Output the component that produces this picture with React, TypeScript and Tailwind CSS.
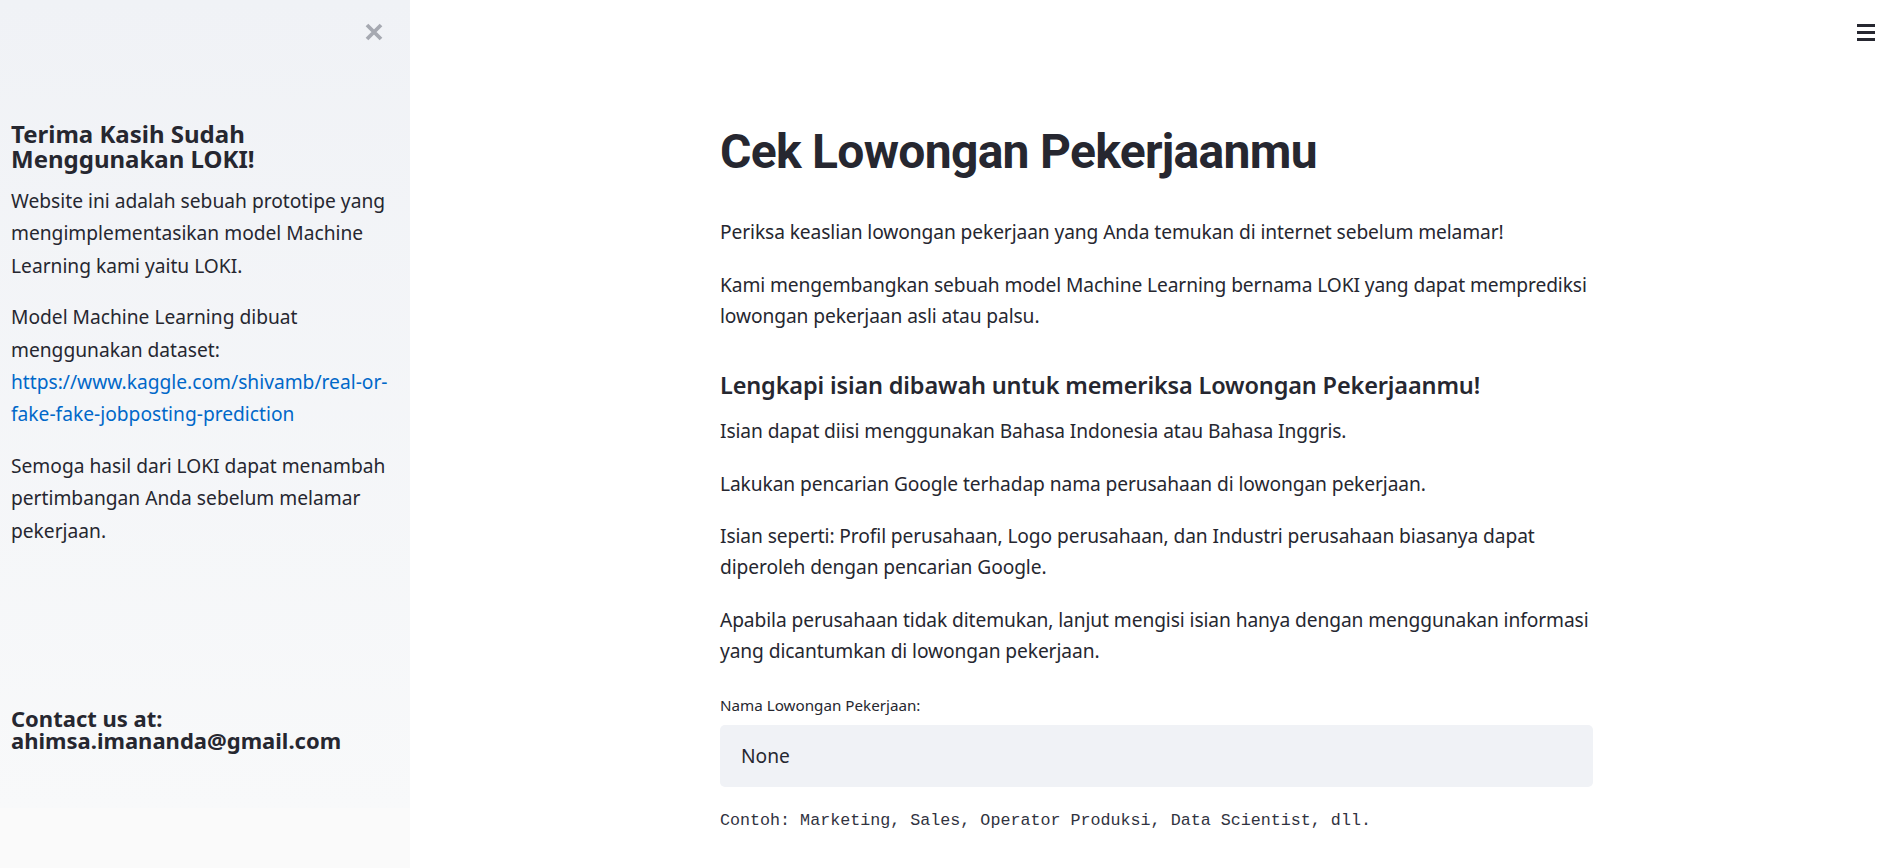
export default function App() {
  const side = "text-[19.2px] leading-[32.4px] text-[#262730]";
  const body = "text-[19.2px] leading-[31px] tracking-[-0.1px] text-[#262730]";
  return (
    <div className="flex min-h-[868px] w-full bg-white font-['Noto_Sans',sans-serif] text-[#262730]">
      {/* Sidebar */}
      <aside className="flex w-[410px] shrink-0 flex-col bg-[#fafafa]">
        <div className="flex min-h-[808px] flex-col bg-gradient-to-b from-[#f0f2f6] to-[#f8f9fa] pl-[11px] pr-[20px]">
          <div className="flex justify-end pr-[6px] pt-[22px]">
            <button className="flex h-[20px] w-[20px] items-center justify-center text-[#a6a9b1]">
              <svg width="18" height="18" viewBox="0 0 18 18" fill="none" stroke="currentColor" strokeWidth="3.8">
                <path d="M2 2L16 16M16 2L2 16" />
              </svg>
            </button>
          </div>
          <h3 className="mt-[79px] text-[24px] font-bold leading-[25px]">
            Terima Kasih Sudah
            <br />
            Menggunakan LOKI!
          </h3>
          <p className={`${side} mt-[14px]`}>
            Website ini adalah sebuah prototipe yang mengimplementasikan model Machine Learning kami yaitu LOKI.
          </p>
          <p className={`${side} mt-[19px]`}>
            Model Machine Learning dibuat menggunakan dataset:{" "}
            <a href="#" className="text-[#0068c9]">
              https://www.kaggle.com/shivamb/real-or-fake-fake-jobposting-prediction
            </a>
          </p>
          <p className={`${side} mt-[19px]`}>
            Semoga hasil dari LOKI dapat menambah pertimbangan Anda sebelum melamar pekerjaan.
          </p>
          <h3 className="mt-[160px] text-[22px] font-bold leading-[22px]">
            Contact us at:
            <br />
            ahimsa.imananda@gmail.com
          </h3>
        </div>
      </aside>

      {/* Main */}
      <main className="flex flex-1 justify-center pl-[19px]">
        <div className="w-[873px] pt-[120px]">
          <h1 className="font-['Roboto',sans-serif] text-[48px] font-bold leading-[63px] tracking-[-0.7px]">
            Cek Lowongan Pekerjaanmu
          </h1>
          <p className={`${body} mt-[33px]`}>
            Periksa keaslian lowongan pekerjaan yang Anda temukan di internet sebelum melamar!
          </p>
          <p className={`${body} mt-[22px]`}>
            Kami mengembangkan sebuah model Machine Learning bernama LOKI yang dapat memprediksi lowongan pekerjaan asli atau palsu.
          </p>
          <h3 className="mt-[40px] text-[23.5px] font-semibold leading-[29px] tracking-[-0.15px]">
            Lengkapi isian dibawah untuk memeriksa Lowongan Pekerjaanmu!
          </h3>
          <p className={`${body} mt-[15px]`}>Isian dapat diisi menggunakan Bahasa Indonesia atau Bahasa Inggris.</p>
          <p className={`${body} mt-[22px]`}>Lakukan pencarian Google terhadap nama perusahaan di lowongan pekerjaan.</p>
          <p className={`${body} mt-[21px]`}>
            Isian seperti: Profil perusahaan, Logo perusahaan, dan Industri perusahaan biasanya dapat diperoleh dengan pencarian Google.
          </p>
          <p className={`${body} mt-[22px]`}>
            Apabila perusahaan tidak ditemukan, lanjut mengisi isian hanya dengan menggunakan informasi yang dicantumkan di lowongan pekerjaan.
          </p>
          <label className="mt-[29px] block text-[15.2px] leading-[20px]">Nama Lowongan Pekerjaan:</label>
          <div className="mt-[10px] flex h-[62px] items-center rounded-[5px] bg-[#f0f2f6] px-[21px] text-[19.2px]">
            None
          </div>
          <p className="mt-[22px] font-['Liberation_Mono',monospace] text-[16.7px] leading-[24px] text-[#31333f]">
            Contoh: Marketing, Sales, Operator Produksi, Data Scientist, dll.
          </p>
        </div>
      </main>

      {/* Hamburger */}
      <button className="absolute right-[9px] top-[24px] flex h-[17px] w-[18px] flex-col justify-between">
        <span className="h-[3px] w-full bg-[#262730]" />
        <span className="h-[3px] w-full bg-[#262730]" />
        <span className="h-[3px] w-full bg-[#262730]" />
      </button>
    </div>
  );
}
